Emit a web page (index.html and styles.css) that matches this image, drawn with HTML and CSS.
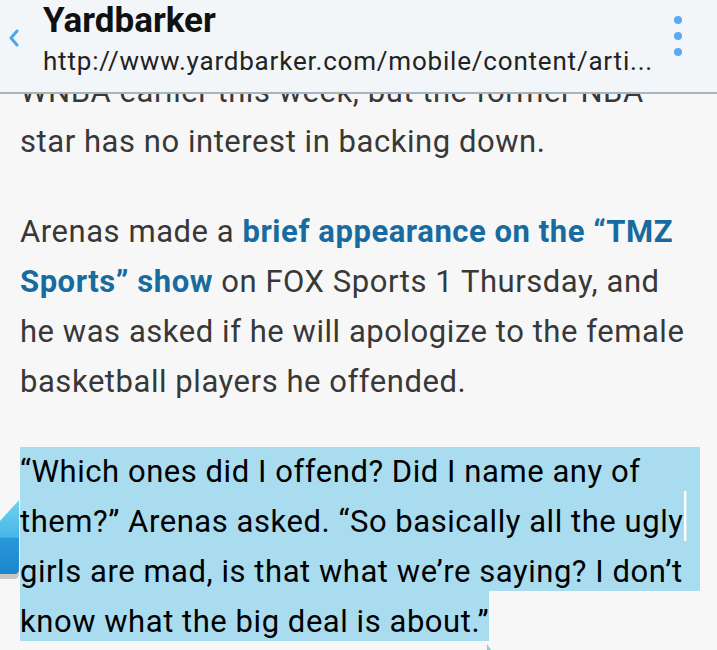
FILE: index.html
```html
<!DOCTYPE html>
<html lang="en">
<head>
<meta charset="utf-8">
<title>Yardbarker</title>
<link rel="stylesheet" href="styles.css">
</head>
<body>
<header class="bar">
  <svg class="back" width="12" height="18" viewBox="0 0 12 18"><path d="M9 2 L3 9 L9 16" fill="none" stroke="#4da5ea" stroke-width="3" stroke-linecap="round" stroke-linejoin="round"/></svg>
  <div class="titles">
    <div class="title">Yardbarker</div>
    <div class="url">http://www.yardbarker.com/mobile/content/arti...</div>
  </div>
  <div class="menu"><span class="dot"></span><span class="dot"></span><span class="dot"></span></div>
</header>
<main class="article">
  <p>WNBA earlier this week, but the former NBA star has no interest in backing down.</p>
  <p>Arenas made a <a class="link" href="#">brief appearance on the “TMZ Sports” show</a> on FOX Sports 1 Thursday, and he was asked if he will apologize to the female basketball players he offended.</p>
  <p class="quote"><span class="sel-block">“Which ones did I offend? Did I name any of<br>them?” Arenas asked. “So basically all the ugly<br>girls are mad, is that what we’re saying? I don’t</span><span class="sel-last">know what the big deal is about.”</span></p>
</main>
<svg class="handle-left" width="22" height="86" viewBox="0 0 22 86">
  <defs>
    <linearGradient id="hg" x1="0" y1="0" x2="0" y2="1">
      <stop offset="0" stop-color="#6fd2f2"/>
      <stop offset="0.5" stop-color="#48b6e6"/>
      <stop offset="0.52" stop-color="#2a98d8"/>
      <stop offset="1" stop-color="#1a86cc"/>
    </linearGradient>
  </defs>
  <path d="M0 24 L19 3 L19 72 Q19 77 14 77 L0 77 Z" fill="#8a8a8a" opacity="0.45" transform="translate(0 5)"/>
  <path d="M0 24 L19 3 L19 72 Q19 77 14 77 L0 77 Z" fill="url(#hg)"/>
</svg>
<div class="caret"></div>
<svg class="handle-right" width="10" height="6" viewBox="0 0 10 6"><path d="M1 0 L5 6 L1 6 Z" fill="#8fc3de"/></svg>
</body>
</html>
```
FILE: styles.css
```css
html, body {
  margin: 0;
  padding: 0;
}
body {
  width: 717px;
  height: 650px;
  overflow: hidden;
  background: #f7f7f7;
  font-family: Roboto, "Noto Sans", sans-serif;
  position: relative;
}
.bar {
  position: fixed;
  top: 0;
  left: 0;
  right: 0;
  height: 92px;
  background: #f3f6f9;
  border-bottom: 2px solid #a8b5be;
  display: flex;
  align-items: flex-start;
  z-index: 2;
}
.back {
  margin: 29px 0 0 8px;
  flex: none;
}
.titles {
  margin-left: 23px;
  flex: 1;
  min-width: 0;
}
.title {
  font-weight: 700;
  font-size: 35px;
  line-height: 40px;
  margin-top: 1px;
  color: #111;
}
.url {
  font-size: 26px;
  line-height: 30px;
  margin-top: 5px;
  color: #222;
  font-weight: 400;
  letter-spacing: 0.8px;
  white-space: nowrap;
}
.menu {
  width: 8px;
  margin: 16px 35px 0 0;
  display: flex;
  flex-direction: column;
  gap: 8px;
}
.dot {
  width: 8px;
  height: 8px;
  border-radius: 50%;
  background: #58abf0;
}
.article {
  padding: 67px 17px 0 20px;
  font-size: 31px;
  line-height: 50px;
  letter-spacing: 0.55px;
  color: #383838;
}
.article p {
  margin: 0 0 40px;
}
.link {
  color: #186b9e;
  font-weight: 700;
  text-decoration: none;
}
.quote {
  color: #000;
  white-space: nowrap;
}
.sel-block {
  display: block;
  background: linear-gradient(#aadcf0, #aadcf0) 0 0 / 100% 144px no-repeat;
}
.sel-last {
  display: inline-block;
  background: linear-gradient(#aadcf0, #aadcf0) 0 0 / 100% 44px no-repeat;
  box-shadow: 0 -6px 0 #aadcf0;
}
.handle-left {
  position: absolute;
  left: 0;
  top: 497px;
  z-index: 3;
}
.caret {
  position: absolute;
  left: 684px;
  top: 491px;
  width: 2px;
  height: 50px;
  background: #ffffff;
  box-shadow: 1px 0 0 #c9e6f3;
}
.handle-right {
  position: absolute;
  left: 486px;
  top: 644px;
}
```
